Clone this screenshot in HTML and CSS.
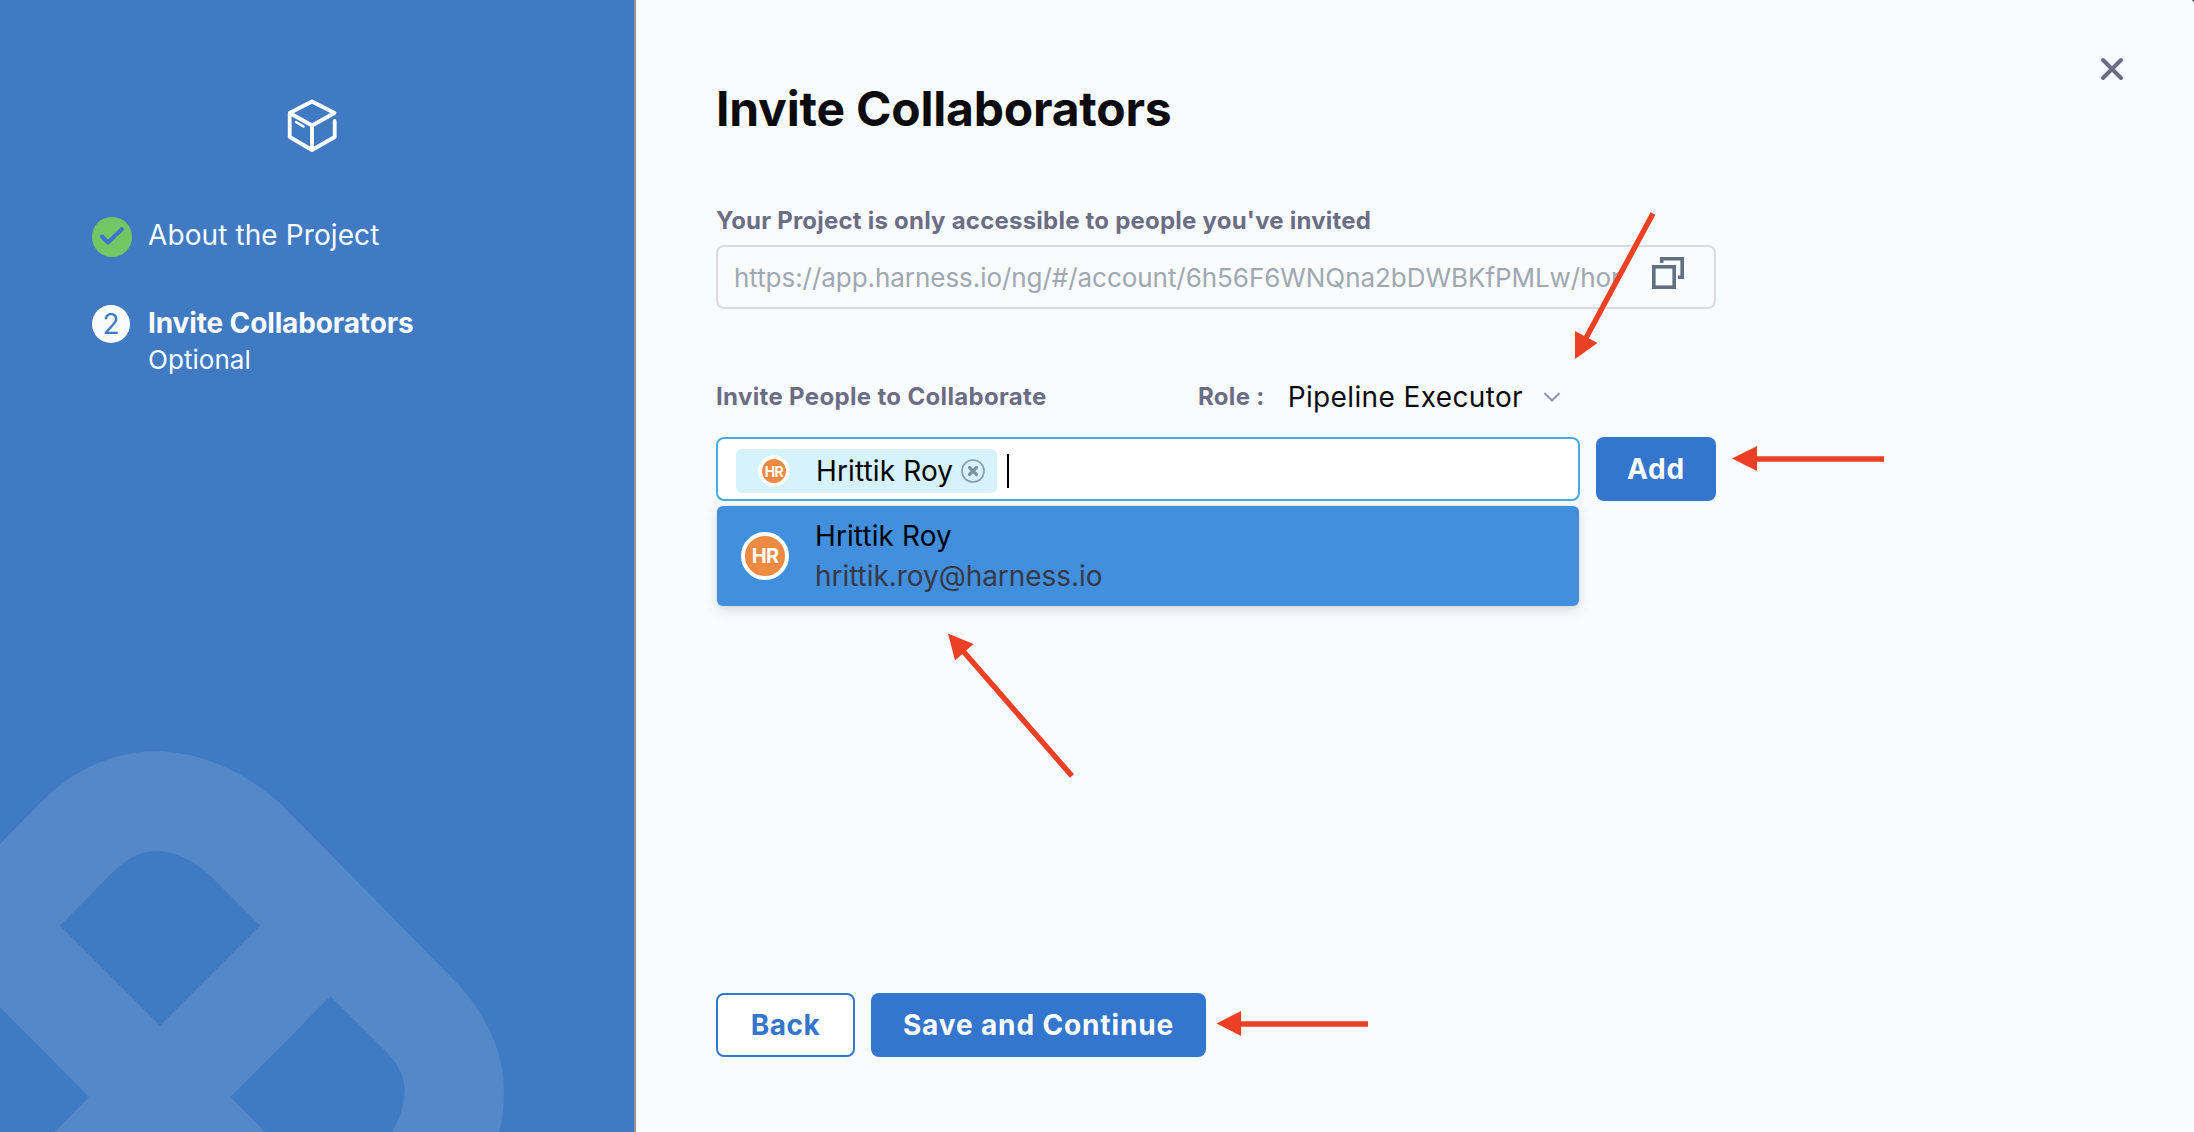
FILE: index.html
```
<!DOCTYPE html>
<html lang="en">
<head>
<meta charset="utf-8">
<title>Invite Collaborators</title>
<link rel="stylesheet" href="styles.css">
</head>
<body>
<div class="wizard">
  <aside class="sidebar">
    <svg class="sidebar-art" viewBox="0 0 634 1132" aria-hidden="true">
      <path fill-rule="evenodd" d="M0 844 L40 803 Q92 751 158 751 Q222 753 280 803 L455 981 Q504 1033 504 1093 Q504 1114 499.500 1132 H392 Q404.500 1111 404.500 1090 Q404 1069 385 1050.500 L330.400 996.300 L230.600 1097 L265 1132 H54.700 L89 1097 L0 1007 Z M60 925.700 L160 1025.700 L260 925.700 L210.500 875.700 Q182 851 156.500 851 Q133 851 111.500 873.500 Z"/>
    </svg>
    <svg class="cube" viewBox="0 0 52 56" fill="none" aria-hidden="true">
      <path d="M26 3.500 48.500 15 26 27.500 3.700 15ZM3.700 15V39L26 52V27.500M26 52 48.700 39V23" stroke-width="3.800"/>
      <path d="M10 24 17.500 28.500" stroke-width="2.500"/>
    </svg>
    <ol class="steps">
      <li class="step">
        <svg class="step-done" viewBox="0 0 40 40" fill="none" aria-hidden="true"><circle cx="20" cy="20" r="20"/><path d="M10 19.500 16 25.500 29.800 12.200"/></svg>
        <span class="step-title">About the Project</span>
      </li>
      <li class="step step-current">
        <span class="step-number">2</span>
        <div>
          <div class="step-title">Invite Collaborators</div>
          <div class="step-note">Optional</div>
        </div>
      </li>
    </ol>
  </aside>

  <main class="content">
    <button class="close" aria-label="Close"><svg viewBox="0 0 24 24" fill="none"><path d="M3 3 21 21M21 3 3 21"/></svg></button>
    <h1 class="title">Invite Collaborators</h1>
    <section class="form">
      <div class="label">Your Project is only accessible to people you've invited</div>
      <div class="url-box">
        <span class="url">https://app.harness.io/ng/#/account/6h56F6WNQna2bDWBKfPMLw/hor</span>
        <svg class="copy" viewBox="0 0 32 32" fill="none"><path d="M9.700 6V1.800H30.200V20.200H26"/><rect x="1.800" y="9.800" width="20.400" height="20.400"/></svg>
      </div>
      <div class="invite-head">
        <div class="label">Invite People to Collaborate</div>
        <div class="role">
          <span class="label">Role :</span>
          <span class="role-name">Pipeline Executor</span>
          <svg class="chevron" viewBox="0 0 18 12" fill="none"><path d="M1.500 2 9 9.500 16.500 2"/></svg>
        </div>
      </div>
      <div class="invite-row">
        <div class="people-input">
          <div class="tag">
            <span class="avatar avatar-small">HR</span>
            <span class="tag-name">Hrittik Roy</span>
            <svg class="tag-remove" viewBox="0 0 24 24" fill="none"><circle cx="12" cy="12" r="11"/><path d="M8.500 8.500 15.500 15.500M15.500 8.500 8.500 15.500"/></svg>
          </div>
          <span class="caret"></span>
          <div class="menu">
            <span class="avatar">HR</span>
            <div>
              <div class="person-name">Hrittik Roy</div>
              <div class="person-mail">hrittik.roy@harness.io</div>
            </div>
          </div>
        </div>
        <button class="btn btn-primary btn-add">Add</button>
      </div>
    </section>
    <footer class="actions">
      <button class="btn btn-back">Back</button>
      <button class="btn btn-primary btn-save">Save and Continue</button>
    </footer>
  </main>

  <svg class="arrows" viewBox="0 0 2194 1132" aria-hidden="true">
    <path class="shaft" d="M1653 213.500 1586 338M1072 776 963 651M1884 459H1755M1368 1024H1239"/>
    <path class="head" d="M1575 359V331L1597.500 343ZM948 633.500 973.500 644 955 660.500ZM1732 458.500 1757 446V471ZM1216.500 1023.500 1241 1011V1036Z"/>
    <path class="corner" d="M2192 0h2v2z"/>
  </svg>
</div>
</body>
</html>
```
FILE: styles.css
```
* { box-sizing: border-box; }
body { margin: 0; font-family: Inter, "Liberation Sans", sans-serif; }
button { font-family: inherit; margin: 0; padding: 0; cursor: pointer; }
svg { display: block; flex: none; }

.wizard { position: relative; display: flex; width: 2194px; height: 1132px; overflow: hidden; background: #f9fcff; }

/* Sidebar */
.sidebar { position: relative; width: 636px; flex: none; padding-top: 98px; background: #407ac3; border-right: 2px solid #969494; color: #fafbfc; }
.sidebar-art { position: absolute; left: 0; top: 0; width: 634px; height: 1132px; fill: #5388c9; }
.cube { position: relative; width: 52px; height: 56px; margin-left: 286px; stroke: #fff; stroke-linejoin: round; stroke-linecap: round; }
.steps { position: relative; list-style: none; margin: 63px 0 0; padding: 0 0 0 92px; }
.step { display: flex; align-items: flex-start; }
.step-done { width: 40px; height: 40px; margin-right: 16px; }
.step-done circle { fill: #72c664; }
.step-done path { stroke: #3c77cc; stroke-width: 4.2; stroke-linecap: round; stroke-linejoin: round; }
.step-title { font-size: 28px; line-height: 36px; letter-spacing: .1px; white-space: nowrap; }
.step-current { margin-top: 48px; }
.step-current .step-title { font-weight: 700; letter-spacing: -.13px; }
.step-number { width: 38px; height: 38px; margin-right: 18px; border-radius: 50%; background: #fafbfc; color: #407ac3; font-size: 28px; line-height: 39px; text-align: center; }
.step-note { font-size: 26px; line-height: 38px; letter-spacing: .05px; }

/* Content */
.content { position: relative; flex: 1; display: flex; flex-direction: column; padding: 79px 80px 75px; }
.close { position: absolute; top: 57px; right: 70px; width: 24px; height: 24px; border: 0; background: none; }
.close path { stroke: #6b6d85; stroke-width: 4; stroke-linecap: round; }
.title { margin: 0; font-size: 48px; line-height: 60px; font-weight: 700; letter-spacing: -.21px; color: #0b0b0d; }
.form { width: 1000px; margin-top: 67px; }
.label { font-size: 24px; line-height: 30px; font-weight: 700; letter-spacing: .22px; color: #6b6d85; white-space: nowrap; }
.url-box { display: flex; justify-content: space-between; align-items: flex-start; height: 64px; margin-top: 9px; padding: 10px 30px 0 16px; border: 2px solid #d9dae5; border-radius: 8px; background: #fafbfc; }
.url { width: 885px; overflow: hidden; white-space: nowrap; font-size: 26px; line-height: 42px; letter-spacing: -.05px; color: #9da8b3; }
.copy { width: 32px; height: 32px; stroke: #607080; stroke-width: 3.600; }
.invite-head { display: flex; justify-content: space-between; margin-top: 72px; padding-right: 155px; height: 56px; }
.invite-head .label { line-height: 32px; letter-spacing: .34px; }
.role { display: flex; align-items: flex-start; }
.role-name { margin-left: 23px; font-size: 28px; line-height: 32px; letter-spacing: .37px; color: #0b0b0d; }
.chevron { width: 18px; height: 12px; margin: 10px 0 0 20px; stroke: #9293ab; stroke-width: 2; }
.invite-row { display: flex; gap: 16px; }
.people-input { position: relative; display: flex; width: 864px; height: 64px; padding: 10px 18px; border: 2px solid #4aabe0; border-radius: 8px; background: #fff; }
.tag { display: flex; align-items: center; width: 261px; height: 44px; padding-left: 22px; border-radius: 6px; background: #d5f2fd; }
.avatar { display: flex; align-items: center; justify-content: center; flex: none; width: 48px; height: 48px; border: 4px solid #fff; border-radius: 50%; background: #ef8a42; color: #fff; font-size: 20px; font-weight: 700; letter-spacing: -.7px; }
.avatar-small { width: 32px; height: 32px; font-size: 14px; }
.tag-name { margin-left: 26px; font-size: 28px; line-height: 44px; letter-spacing: .12px; color: #000; white-space: nowrap; }
.tag-remove { width: 24px; height: 24px; margin-left: 8px; stroke: #8c9dab; stroke-width: 1.700; }
.tag-remove path { stroke: #80909c; stroke-width: 3.200; stroke-linecap: round; }
.caret { width: 2px; height: 34px; margin: 5px 0 0 10px; background: #000; }
.menu { position: absolute; left: -1px; top: 67px; width: 862px; height: 100px; display: flex; align-items: center; gap: 26px; padding: 0 24px 1px; border-radius: 6px; background: #428fdd; box-shadow: 0 0 2px rgba(40,41,61,.08), 0 4px 12px rgba(60,65,80,.2); }
.person-name, .person-mail { font-size: 28px; line-height: 40px; color: #000; }
.person-name { letter-spacing: .1px; }
.person-mail { letter-spacing: -.05px; color: #383946; }

.btn { height: 64px; border: 0; border-radius: 8px; font-size: 28px; line-height: 64px; font-weight: 700; letter-spacing: .87px; white-space: nowrap; }
.btn-primary { background: #3476ce; color: #fff; }
.btn-add { width: 120px; }
.actions { display: flex; gap: 16px; margin-top: auto; }
.btn-back { width: 139px; border: 2px solid #3476ce; background: #fff; color: #3476ce; line-height: 60px; letter-spacing: .5px; }
.btn-save { width: 335px; }

/* Annotation arrows lying over the page */
.arrows { position: absolute; left: 0; top: 0; width: 2194px; height: 1132px; pointer-events: none; }
.shaft { fill: none; stroke: #ec4024; stroke-width: 5.400; }
.head { fill: #ec4024; }
.corner { fill: #333; }
```
